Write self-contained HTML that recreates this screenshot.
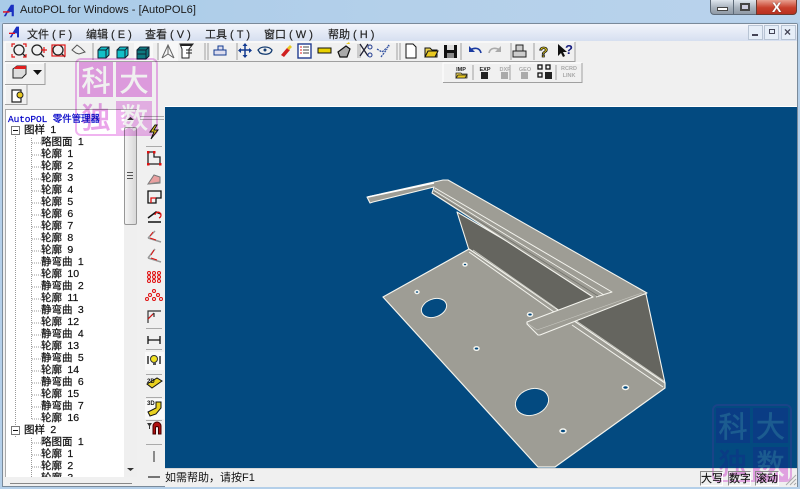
<!DOCTYPE html>
<html><head><meta charset="utf-8"><style>
html,body{margin:0;padding:0}
body{width:800px;height:489px;overflow:hidden;position:relative;background:#f0f0f0;font-family:"Liberation Sans","WenQuanYi Zen Hei","Noto Sans CJK SC",sans-serif;color:#111}
div{position:absolute;box-sizing:border-box}
.t{white-space:nowrap}
#title{left:0;top:0;width:800px;height:23px;background:linear-gradient(90deg,#a9cbe8,#b4d0ea 50%,#b9d3ec)}
#frame{left:0;top:22px;width:800px;height:467px;background:#b4cfe9}
#mdi{left:2px;top:23px;width:796px;height:464px;border:1px solid #7a8a9a;border-radius:2px 2px 0 0;background:#f0f0f0}
#menu{left:3px;top:24px;width:794px;height:17px;background:linear-gradient(#f2f5fb,#d6dff0)}
.m{top:26px;font-size:11px;color:#222;-webkit-text-stroke:.15px #222}
.tr{font-size:10.5px;left:0;line-height:12px;white-space:nowrap;color:#111;word-spacing:2.5px;-webkit-text-stroke:.2px #111;transform:translateY(-1px)}
.stamp{border:2px solid;border-radius:6px;z-index:20}
.p{mix-blend-mode:multiply;border-color:#f0b4f0}
.b{border-color:#1a4488;background:#034a80}
.c,.d,.e{text-align:center;font-family:"WenQuanYi Zen Hei","Noto Sans CJK SC",sans-serif;-webkit-text-stroke:.6px}
.p .c{background:#eaa4ea;color:#fff}
.p .d{color:#eaa4ea}
.p .e{background:#f0b8f0;color:#fff}
.b .c,.b .e{background:#0a3c84;color:#1c5c90}
.b .d{color:#0a3c84}
.st{top:471px;height:15px;font-size:11px;line-height:14px;text-align:center;white-space:nowrap;overflow:hidden;border:1px solid;border-color:#8a8a8a #fff #fff #8a8a8a;z-index:25;-webkit-text-stroke:.15px #111}
</style></head><body>
<div id="title"></div>
<div id="frame"></div>
<svg style="position:absolute;left:3px;top:4px" width="13" height="13" viewBox="0 0 18 18"><path d="M1 17L11 1h4v16h-3V11H7l-3 6z" fill="#1a2fc0"/><path d="M0 10h9v2H0z" fill="#e01020"/></svg>
<div class="t" style="left:20px;top:2px;font-size:11.1px;line-height:16px;color:#1a1a1a">AutoPOL for Windows - [AutoPOL6]</div>
<!-- caption buttons -->
<div style="left:710px;top:-1px;width:24px;height:16px;background:linear-gradient(#dfe6ee,#a8b2bd 55%,#8f99a5);border:1px solid #5d6a78;border-radius:0 0 0 4px"></div>
<div style="left:717px;top:7px;width:11px;height:4px;background:#fff;border:1px solid #444"></div>
<div style="left:733px;top:-1px;width:24px;height:16px;background:linear-gradient(#dfe6ee,#a8b2bd 55%,#8f99a5);border:1px solid #5d6a78"></div>
<div style="left:740px;top:3px;width:10px;height:8px;background:#ccd;border:2px solid #444"></div>
<div style="left:756px;top:-1px;width:41px;height:16px;background:linear-gradient(#e8a090,#c8402c 55%,#b83020);border:1px solid #6a3a30;border-radius:0 0 4px 0"></div>
<div class="t" style="left:772px;top:-1px;font-size:14px;font-weight:bold;color:#fff;line-height:16px;text-shadow:0 0 1px #333">X</div>

<div id="mdi"></div>
<div id="menu"></div>
<svg style="position:absolute;left:9px;top:26px" width="12" height="12" viewBox="0 0 18 18"><path d="M1 17L11 1h4v16h-3V11H7l-3 6z" fill="#1a2fc0"/><path d="M0 10h9v2H0z" fill="#e01020"/></svg>
<div class="t m" style="left:27px">文件 ( F )</div>
<div class="t m" style="left:86px">编辑 ( E )</div>
<div class="t m" style="left:145px">查看 ( V )</div>
<div class="t m" style="left:205px">工具 ( T )</div>
<div class="t m" style="left:264px">窗口 ( W )</div>
<div class="t m" style="left:328px">帮助 ( H )</div>
<div style="left:748px;top:25px;width:15px;height:15px;background:#e6eef8;border:1px solid #b8c4d4"></div>
<div style="left:764px;top:25px;width:15px;height:15px;background:#e6eef8;border:1px solid #b8c4d4"></div>
<div style="left:781px;top:25px;width:15px;height:15px;background:#e6eef8;border:1px solid #b8c4d4"></div>
<div style="left:752px;top:34px;width:6px;height:2px;background:#445"></div>
<div style="left:769px;top:29px;width:6px;height:5px;border:1px solid #445"></div>
<div class="t" style="left:784px;top:25px;font-size:12px;line-height:15px;font-weight:bold;color:#445">×</div>

<!-- toolbars + icons -->
<svg style="position:absolute;left:0;top:0" width="800" height="110" viewBox="0 0 800 110">
<g fill="none" stroke="#fff"><path d="M5 61V42H575"/><path d="M5 84V63H45"/><path d="M5 104V85H27"/><path d="M443 82V63H582"/></g>
<g fill="none" stroke="#a0a0a0"><path d="M5 61.5H575V42"/><path d="M5 84.5H45V63"/><path d="M5 104.5H27V85"/><path d="M443 82.5H582V63"/><path d="M93 43v17M158 43v17M205 43v17M208 43v17M397 43v17M400 43v17M461 43v17M511 43v17M534 43v17M237 43v17"/><path d="M473 65v15M510 65v15M556 65v15"/></g>
<rect x="134" y="43" width="19" height="18" fill="#f8f8f8"/><rect x="159" y="43" width="19" height="18" fill="#f8f8f8"/>
<!-- zoom icons -->
<g fill="none" stroke="#222" stroke-width="1.3"><circle cx="19" cy="50" r="5"/><path d="M23 54l3 3"/><circle cx="37" cy="50" r="5"/><path d="M41 54l3 3"/><circle cx="58" cy="50" r="5"/><path d="M62 54l3 3"/><path d="M72 50l5-5 4 3 4 4-6 2-3-1z" stroke="#555" stroke-width="1"/></g>
<g fill="none" stroke="#e01818" stroke-width="1.2"><path d="M12 47v-3h3M23 44h3v3M12 54v3h3M23 57h3v-3"/><path d="M44 47v6M41 50h6"/><rect x="52" y="45" width="13" height="11"/></g>
<!-- cubes -->
<g stroke="#123"><path d="M98 50l3-3h8v8l-3 3h-8z" fill="#12c0c8"/><path d="M98 50h8v8M106 50l3-3" fill="none"/><path d="M117 50l3-3h8v8l-3 3h-8z" fill="#12c0c8"/><path d="M117 50h8v8M125 50l3-3" fill="none"/><path d="M137 50l3-3h9v9l-3 3h-9z" fill="#0d7a80"/><path d="M137 50h9v9M146 50l3-3M137 54h9" fill="none"/></g>
<!-- fold & filter -->
<path d="M162 58l6-13 6 13M168 45v9M162 58l6-4 6 4" fill="none" stroke="#666"/><path d="M180 44h13l-4 5v9h-7v-9z" fill="#fff" stroke="#222"/><path d="M181 44h11v2h-11z" fill="#222"/><path d="M186 50h6M186 53h6" stroke="#222"/>
<!-- tb -->
<path d="M214 50h12v5h-12zM218 46h5v4h-5z" fill="#dde" stroke="#123a90"/>
<path d="M245 44v13M239 50h12" stroke="#123a90" stroke-width="1.5"/><path d="M245 43l-2.500 3h5zM245 58l-2.500-3h5zM238 50.500l3-2.500v5zM252 50.500l-3-2.500v5z" fill="#123a90"/>
<path d="M258 50c3-4 11-4 14 0 -1 5-8 5-12 3z" fill="none" stroke="#123a70" stroke-width="1.3"/><circle cx="265" cy="50" r="1.500" fill="#123a70"/>
<path d="M281 55l6-7 3 2-6 7z" fill="#d02020"/><path d="M287 48l3-3 2 2-3 3z" fill="#e8c820"/>
<rect x="298" y="44" width="13" height="14" fill="#fff" stroke="#223c90" stroke-width="1.4"/><path d="M303 47h6M303 50h6M303 53h6" stroke="#444"/><path d="M300 47h2M300 50h2M300 53h2" stroke="#e02020"/>
<rect x="318" y="48" width="13" height="5" fill="#e8d000" stroke="#111"/>
<path d="M338 52l8-6 4 3-3 8h-7z" fill="#aaa" stroke="#111" stroke-width="1.2"/><path d="M346 44l3-2 1 2z" fill="#e8c820"/>
<rect x="357" y="44" width="4" height="14" fill="#ccc"/><path d="M360 44l8 12M368 44l-8 12" stroke="#223" stroke-width="1.3"/><circle cx="370" cy="47" r="2" fill="none" stroke="#223c90"/><circle cx="370" cy="55" r="2" fill="none" stroke="#223c90"/>
<path d="M377 49l5 3 7-6-1-1M381 57l6-8" fill="none" stroke="#3050a0" stroke-dasharray="2 1" stroke-width="1.3"/>
<!-- file -->
<path d="M406 44h7l3 3v11h-10z" fill="#fff" stroke="#111"/>
<path d="M425 48h5l2 2h5v7h-12z" fill="#e8d050" stroke="#111"/><path d="M425 57l3-6h10l-3 6z" fill="#e8c820" stroke="#111"/>
<rect x="444" y="45" width="13" height="13" fill="#111"/><rect x="447" y="45" width="7" height="5" fill="#ddd"/><rect x="447" y="53" width="7" height="5" fill="#888"/>
<path d="M481 53c-1-5-6-6-11-3" fill="none" stroke="#1a3aa0" stroke-width="1.6"/><path d="M469 46v6h6z" fill="#1a3aa0"/>
<path d="M489 53c1-5 6-6 11-3" fill="none" stroke="#aaa" stroke-width="1.6"/><path d="M501 46v6h-6z" fill="#aaa"/>
<path d="M513 51h13v6h-13zM516 45h7v6h-7z" fill="#ccc" stroke="#222"/>
<text x="539" y="57" font-family="Liberation Sans" font-weight="bold" font-size="15" fill="#e8d020" stroke="#111" stroke-width=".8">?</text>
<path d="M558 44v12l3-3 2 4 2-1-2-4h4z" fill="#111"/><text x="565" y="54" font-family="Liberation Sans" font-weight="bold" font-size="13" fill="#1a2080">?</text>
<!-- row 2 -->
<path d="M13 69l4-3h9v8l-4 4h-9z" fill="#ddd" stroke="#222"/><path d="M14 68l3-2h9v3h-11z" fill="#e02020"/><path d="M33 70h9l-4.500 5z" fill="#111"/>
<!-- row 3 -->
<path d="M12 90h9v12h-9z" fill="#fff" stroke="#222" stroke-width="1.200"/><circle cx="20" cy="95" r="3" fill="#e8c820" stroke="#222"/>
<!-- imp row -->
<g font-family="Liberation Sans" font-size="5.500" font-weight="bold" text-anchor="middle"><text x="461" y="71" fill="#222">IMP</text><text x="485" y="71" fill="#222">EXP</text><text x="505" y="71" fill="#aaa">DXF</text><text x="525" y="71" fill="#aaa">GEO</text><text x="569" y="70" fill="#aaa">RCRD</text><text x="569" y="77" fill="#aaa">LINK</text></g>
<path d="M456 73h5l1 1h5v4h-11z" fill="#e8d050" stroke="#222" stroke-width=".8"/><path d="M456 78l2-3h9l-2 3z" fill="#e8c820" stroke="#222" stroke-width=".8"/>
<rect x="481" y="72" width="7" height="7" fill="#222"/><rect x="501" y="72" width="7" height="7" fill="#aaa"/><rect x="521" y="72" width="7" height="7" fill="#aaa"/>
<g fill="none" stroke="#111" stroke-width="1.300"><rect x="538" y="65" width="4" height="4"/><rect x="546" y="65" width="4" height="4"/><rect x="538" y="73" width="4" height="4"/></g><rect x="545" y="72" width="7" height="7" fill="#222"/>
</svg>

<!-- left panel -->
<div style="left:4px;top:106px;width:160px;height:380px;background:#f0f0f0"></div>
<div style="left:5px;top:109px;width:132px;height:368px;background:#fff;overflow:hidden;border-left:1px solid #aaa;border-top:1px solid #aaa" id="tree">
<svg style="position:absolute;left:0;top:0" width="120" height="368"><g fill="none" stroke="#999" stroke-dasharray="1 1"><path d="M9.500 20V328M25.500 28V310M25.500 328V368M26 33h9M26 45h9M26 57h9M26 69h9M26 81h9M26 93h9M26 105h9M26 117h9M26 129h9M26 141h9M26 153h9M26 165h9M26 177h9M26 189h9M26 201h9M26 213h9M26 225h9M26 237h9M26 249h9M26 261h9M26 273h9M26 285h9M26 297h9M26 309h9M26 333h9M26 345h9M26 357h9"/></g>
<g fill="#fff" stroke="#777"><rect x="5.500" y="16.500" width="8" height="8"/><rect x="5.500" y="316.500" width="8" height="8"/></g><path d="M7 20.500h5M7 320.500h5" stroke="#111"/></svg>
<div class="tr" style="left:2px;top:2px;font:9.5px 'Liberation Mono','WenQuanYi Zen Hei',monospace;color:#0000c8;word-spacing:0;-webkit-text-stroke:.2px #0000c8;letter-spacing:-.1px">AutoPOL 零件管理器</div>
<div class="tr" style="left:18px;top:15px">图样 1</div>
<div class="tr" style="left:35px;top:27px">略图面 1</div>
<div class="tr" style="left:35px;top:39px">轮廓 1</div>
<div class="tr" style="left:35px;top:51px">轮廓 2</div>
<div class="tr" style="left:35px;top:63px">轮廓 3</div>
<div class="tr" style="left:35px;top:75px">轮廓 4</div>
<div class="tr" style="left:35px;top:87px">轮廓 5</div>
<div class="tr" style="left:35px;top:99px">轮廓 6</div>
<div class="tr" style="left:35px;top:111px">轮廓 7</div>
<div class="tr" style="left:35px;top:123px">轮廓 8</div>
<div class="tr" style="left:35px;top:135px">轮廓 9</div>
<div class="tr" style="left:35px;top:147px">静弯曲 1</div>
<div class="tr" style="left:35px;top:159px">轮廓 10</div>
<div class="tr" style="left:35px;top:171px">静弯曲 2</div>
<div class="tr" style="left:35px;top:183px">轮廓 11</div>
<div class="tr" style="left:35px;top:195px">静弯曲 3</div>
<div class="tr" style="left:35px;top:207px">轮廓 12</div>
<div class="tr" style="left:35px;top:219px">静弯曲 4</div>
<div class="tr" style="left:35px;top:231px">轮廓 13</div>
<div class="tr" style="left:35px;top:243px">静弯曲 5</div>
<div class="tr" style="left:35px;top:255px">轮廓 14</div>
<div class="tr" style="left:35px;top:267px">静弯曲 6</div>
<div class="tr" style="left:35px;top:279px">轮廓 15</div>
<div class="tr" style="left:35px;top:291px">静弯曲 7</div>
<div class="tr" style="left:35px;top:303px">轮廓 16</div>
<div class="tr" style="left:18px;top:315px">图样 2</div>
<div class="tr" style="left:35px;top:327px">略图面 1</div>
<div class="tr" style="left:35px;top:339px">轮廓 1</div>
<div class="tr" style="left:35px;top:351px">轮廓 2</div>
<div class="tr" style="left:35px;top:363px">轮廓 3</div>
<div style="left:118px;top:0;width:13px;height:368px;background:#efefef"></div>
<div style="left:118px;top:17px;width:13px;height:98px;background:linear-gradient(90deg,#f4f4f4,#d8d8d8);border:1px solid #979797;border-radius:2px"></div>
<div style="left:121px;top:62px;width:6px;height:7px;border-top:1px solid #555;border-bottom:1px solid #555"></div>
<div style="left:121px;top:65px;width:6px;height:1px;background:#555"></div>
<svg style="position:absolute;left:118px;top:0" width="13" height="368"><path d="M3 10l3.500-3 3.500 3zM3 358l3.500 3 3.500-3z" fill="#333"/></svg>
</div>
<div style="left:10px;top:483px;width:122px;height:1px;background:#888"></div>
<div style="left:140px;top:116px;width:24px;height:4px;border-top:1px solid #aaa;border-bottom:1px solid #aaa"></div>

<!-- side toolbar -->
<svg style="position:absolute;left:144px;top:108px;z-index:5" width="21" height="375" viewBox="144 108 21 375">
<g stroke="#aaa"><path d="M146 146.500h16M146 328.500h16M146 349.500h16M146 374.500h16M146 397.500h16M146 420.500h16M146 444.500h16"/></g>
<path d="M155 125l-5 7h4l-3 7 7-9h-4l3-5z" fill="#e8d020" stroke="#111"/>
<path d="M148 152h6v5h6v7h-12z" fill="none" stroke="#222" stroke-width="1.300"/><g fill="#e01010"><rect x="147" y="151" width="2.500" height="2.500"/><rect x="153" y="151" width="2.500" height="2.500"/><rect x="147" y="163" width="2.500" height="2.500"/><rect x="159" y="163" width="2.500" height="2.500"/></g>
<path d="M148 184l6-9 6 2v6z" fill="#e8a0a0" stroke="#777"/><path d="M148 184l12-2" stroke="#888"/>
<path d="M148 191h13v7h-5v5h-8z" fill="none" stroke="#111" stroke-width="1.300"/><path d="M151 203v-5h5" fill="none" stroke="#e01010" stroke-width="1.300"/>
<path d="M148 218l8-6 5 2M148 222l13 0" fill="none" stroke="#111" stroke-width="1.500"/><path d="M155 215a3 3 0 1 1 4 3" fill="none" stroke="#e01010" stroke-width="1.300"/>
<path d="M148 238l7-7M148 238l13 4" fill="none" stroke="#999" stroke-width="1.500"/><path d="M150 236l3-4M150 238l6 2" stroke="#e01010" fill="none"/>
<path d="M148 258l7-9M148 258l13 4" fill="none" stroke="#999" stroke-width="1.500"/><path d="M151 255l3-5M151 258l6 2" stroke="#e01010" fill="none"/>
<g fill="none" stroke="#e01010" stroke-width="1"><circle cx="149" cy="273" r="1.500"/><circle cx="154" cy="273" r="1.500"/><circle cx="159" cy="273" r="1.500"/><circle cx="149" cy="277" r="1.500"/><circle cx="154" cy="277" r="1.500"/><circle cx="159" cy="277" r="1.500"/><circle cx="149" cy="281" r="1.500"/><circle cx="154" cy="281" r="1.500"/><circle cx="159" cy="281" r="1.500"/><circle cx="154" cy="291" r="1.500"/><circle cx="150" cy="295" r="1.500"/><circle cx="158" cy="295" r="1.500"/><circle cx="154" cy="299" r="1.500"/><circle cx="147" cy="299" r="1.500"/><circle cx="161" cy="299" r="1.500"/></g>
<path d="M148 323v-12h13M148 319l6-6M154 313v4" fill="none" stroke="#333" stroke-width="1.200"/><path d="M148 319l5-5" stroke="#e01010"/>
<path d="M148 336v8M160 336v8M148 340h12" stroke="#111" stroke-width="1.300"/>
<rect x="145" y="352" width="19" height="18" fill="#f9f9f9"/><path d="M148 356v8M160 356v8" stroke="#111" stroke-width="1.300"/><circle cx="154" cy="359" r="3.500" fill="#f0e020" stroke="#333"/><rect x="153" y="362" width="3" height="3" fill="#555"/>
<path d="M147 384l10-6 5 3-10 7z" fill="#e8d020" stroke="#111"/><text x="147" y="383" font-family="Liberation Sans" font-size="6" font-weight="bold" fill="#111">2D</text>
<rect x="145" y="399" width="19" height="20" fill="#f9f9f9"/><path d="M148 412l8-4v-6h5v6l-5 6-6 2z" fill="#e8d020" stroke="#111"/><text x="147" y="405" font-family="Liberation Sans" font-size="6" font-weight="bold" fill="#111">3D</text>
<path d="M153 426v8h2.500v-6a1.500 1.500 0 0 1 3 0v6h2.500v-8a4 4 0 0 0-8 0z" fill="#b01010" stroke="#400"/><path d="M147 423h5l-2 3v3h-1v-3z" fill="#333"/>
<path d="M154 451v11" stroke="#555" stroke-width="1.300"/><path d="M148 477h12" stroke="#333" stroke-width="1.300"/>
</svg>

<!-- canvas -->
<div style="left:165px;top:106px;width:632px;height:362px;background:#034a80;border-top:1px solid #fff"></div>
<svg style="position:absolute;left:165px;top:107px" width="632" height="361" viewBox="165 107 632 361">
<g stroke-linejoin="round">
<path d="M457 212L600 296L646 294L665 383L469 250Z" fill="#65655f" stroke="#f4f4ee" stroke-width="1.100"/>
<path d="M383 297L469 249L665 383V388L555 467H538Z" fill="#9e9d95" stroke="#f4f4ee" stroke-width="1.200"/>
<path d="M469 252L554 312M572 325L663 387" fill="none" stroke="#f4f4ee" stroke-width="1"/>
<path d="M473 250L556 308M575 320L664 381" fill="none" stroke="#c8c8c0" stroke-width="1"/>
<path d="M367 197L443 180L448 180L647 293L540 335L538 335L527 324L527 322L593 297L432 193L434 187L373 202L370 203Z" fill="#9e9d95" stroke="#f4f4ee" stroke-width="1.100"/>
<path d="M435 188L612 292L596 297" stroke="#f4f4ee" stroke-width="1" fill="none"/>
<path d="M434 190.500L604 295" stroke="#f4f4ee" stroke-width=".8" fill="none"/>
<path d="M433 192L598 296" stroke="#74746e" stroke-width=".8" fill="none"/>
<path d="M368 197L434 183" stroke="#fff" stroke-width="1.500" fill="none"/>
<path d="M527 323L537 330L642 293" stroke="#f4f4ee" stroke-width=".6" fill="none" opacity=".5"/>
</g>
<g fill="#034a80" stroke="#f4f4ee"><ellipse cx="434" cy="308" rx="13" ry="9" transform="rotate(-20 434 308)"/><ellipse cx="532" cy="402" rx="17" ry="13" transform="rotate(-20 532 402)"/></g>
<g fill="#034a80" stroke="#f4f4ee" stroke-width="1.500"><ellipse cx="417" cy="292" rx="2" ry="1.500"/><ellipse cx="465" cy="264.500" rx="2" ry="1.500"/><ellipse cx="476.500" cy="348.500" rx="2.500" ry="1.800"/><ellipse cx="530" cy="314.500" rx="2.500" ry="1.800"/><ellipse cx="625.500" cy="387.500" rx="3" ry="2"/><ellipse cx="563" cy="431" rx="3" ry="2"/></g>
</svg>

<!-- status bar -->
<div style="left:165px;top:468px;width:632px;height:19px;background:#f0f0f0;border-top:1px solid #d8d8d8"></div>
<div class="t" style="left:165px;top:471px;font-size:11px;line-height:15px;z-index:25">如需帮助，请按F1</div>
<div class="st" style="left:700px;width:23px">大写</div>
<div class="st" style="left:728px;width:23px">数字</div>
<div class="st" style="left:755px;width:24px">滚动</div>
<svg style="position:absolute;left:784px;top:473px" width="13" height="13"><path d="M12 2L2 12M12 6L6 12M12 10L10 12" stroke="#aaa" fill="none"/></svg>
<div style="left:0;top:487px;width:800px;height:2px;background:#b4cfe9"></div>

<!-- stamps -->
<div class="stamp p" style="left:75px;top:58px;width:83px;height:78px">
<div class="c" style="left:2px;top:2px;width:34px;height:35px;font-size:29px;line-height:34px">科</div>
<div class="c" style="left:39px;top:2px;width:36px;height:35px;font-size:29px;line-height:34px">大</div>
<div class="d" style="left:2px;top:39px;width:34px;height:35px;font-size:29px;line-height:34px">独</div>
<div class="e" style="left:39px;top:41px;width:36px;height:33px;font-size:28px;line-height:33px">数</div>
</div>
<div style="left:712px;top:404px;width:80px;height:64px;overflow:hidden;z-index:20">
<div class="stamp b" style="left:0;top:0;width:80px;height:78px">
<div class="c" style="left:2px;top:2px;width:34px;height:35px;font-size:29px;line-height:34px">科</div>
<div class="c" style="left:39px;top:2px;width:35px;height:35px;font-size:29px;line-height:34px">大</div>
<div class="d" style="left:2px;top:39px;width:34px;height:35px;font-size:29px;line-height:34px">独</div>
<div class="e" style="left:39px;top:41px;width:35px;height:33px;font-size:28px;line-height:33px">数</div>
</div></div>
<div style="left:712px;top:468px;width:80px;height:15px;overflow:hidden;z-index:20;mix-blend-mode:multiply">
<div class="stamp p" style="left:0;top:-64px;width:80px;height:78px;mix-blend-mode:normal">
<div class="d" style="left:2px;top:39px;width:34px;height:35px;font-size:29px;line-height:34px">独</div>
<div class="e" style="left:39px;top:41px;width:35px;height:33px;font-size:28px;line-height:33px;background:#eeaaee">数</div>
</div></div>
</body></html>
